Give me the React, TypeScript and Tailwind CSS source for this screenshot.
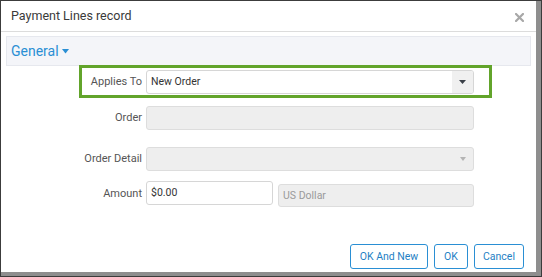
const font = { fontFamily: 'Roboto, "Liberation Sans", Arial, sans-serif' };

function Row({ label, highlight, children, className = '' }: { label: string; highlight?: boolean; children: React.ReactNode; className?: string }) {
  return (
    <div
      className={`ml-[78px] w-[413px] flex items-center border-[3px] pt-[2px] pb-[1px] ${highlight ? 'border-[#62a42b]' : 'border-transparent'} ${className}`}
    >
      <label className="w-[60px] text-right text-[11px] text-[#555] shrink-0 whitespace-nowrap flex justify-end">{label}</label>
      <div className="ml-[4px] w-[328px] flex items-start gap-[5px]">{children}</div>
    </div>
  );
}

export default function App() {
  return (
    <div className="w-[542px] h-[277px] bg-[#3c3c3c] pl-[1px] pt-[1px] overflow-hidden" style={font}>
      <div className="w-[540px] h-[275px] bg-[#8e8e8e] relative">
        <div className="w-[535px] h-[271px] bg-white flex flex-col">
          <div className="h-[31px] border-b border-[#dcdcdc] flex items-center justify-between pl-[10px] pr-[12px]">
            <span className="text-[12.5px] text-[#3a3a3a] mt-[1px]">Payment Lines record</span>
            <svg width="9" height="9" viewBox="0 0 9 9" className="mt-[2px]">
              <path d="M1 1 L8 8 M8 1 L1 8" stroke="#a8a8a8" strokeWidth="2.2" strokeLinecap="square" />
            </svg>
          </div>

          <div className="mt-[4px] mx-[5px] h-[30px] bg-[#f4f5f9] border border-[#e6e8ee] flex items-center pl-[4px]">
            <span className="text-[14px] text-[#2a8fd4]">General</span>
            <svg width="7" height="5" viewBox="0 0 7 5" className="ml-[3px] mt-[1px]">
              <path d="M0 0 H7 L3.5 4.5 Z" fill="#2a8fd4" />
            </svg>
          </div>

          <Row label="Applies To" highlight className="-mt-[1px]">
            <div className="w-[328px] h-[24px] border border-[#d6d6d6] rounded-[3px] flex items-center overflow-hidden">
              <span className="flex-1 pl-[4px] text-[10.5px] text-[#333]">New Order</span>
              <div className="w-[21px] h-full bg-[#f0f0f0] flex items-center justify-center">
                <svg width="7" height="4" viewBox="0 0 7 4">
                  <path d="M0 0 H7 L3.5 4 Z" fill="#3a3f47" />
                </svg>
              </div>
            </div>
          </Row>

          <Row label="Order" className="mt-[3px]">
            <div className="w-[328px] h-[24px] bg-[#eeeeee] border border-[#dddddd] rounded-[3px]" />
          </Row>

          <Row label="Order Detail" className="mt-[8px]">
            <div className="w-[328px] h-[24px] bg-[#eeeeee] border border-[#dddddd] rounded-[3px] flex items-center justify-end pr-[7px]">
              <svg width="6" height="4" viewBox="0 0 6 4">
                <path d="M0 0 H6 L3 4 Z" fill="#b4b4b4" />
              </svg>
            </div>
          </Row>

          <Row label="Amount" className="mt-[1px]">
            <div className="w-[127px] h-[24px] border border-[#d6d6d6] rounded-[3px] flex items-center pl-[4px] text-[10.5px] text-[#333]">
              $0.00
            </div>
            <div className="mt-[3px] w-[196px] h-[23px] bg-[#eeeeee] border border-[#dddddd] rounded-[3px] flex items-center pl-[4px] text-[10.5px] text-[#9a9a9a]">
              US Dollar
            </div>
          </Row>

          <div className="mt-auto mb-[3px] flex justify-end gap-[6px] pr-[12px]">
            <button className="h-[25px] w-[78px] border border-[#2a8fd4] rounded-[3px] text-[10.5px] text-[#1f7fc4] bg-white">OK And New</button>
            <button className="h-[25px] w-[34px] border border-[#2a8fd4] rounded-[3px] text-[10.5px] text-[#1f7fc4] bg-white">OK</button>
            <button className="h-[25px] w-[50px] border border-[#2a8fd4] rounded-[3px] text-[10.5px] text-[#1f7fc4] bg-white">Cancel</button>
          </div>
        </div>
      </div>
    </div>
  );
}
